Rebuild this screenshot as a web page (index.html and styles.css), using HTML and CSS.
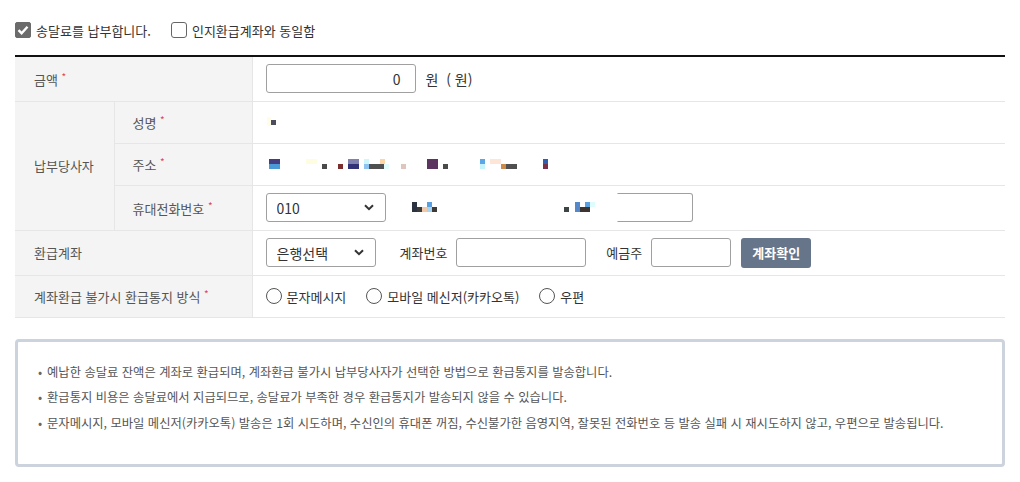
FILE: index.html
```html
<!DOCTYPE html>
<html lang="ko">
<head>
    <meta charset="UTF-8">
    <title>송달료 납부</title>
    <link rel="stylesheet" href="styles.css">
</head>
<body>
    <div class="wrap">
        <div class="check-row">
            <label class="chk"><span class="box on"><svg width="12" height="10" viewBox="0 0 12 10"><path d="M1.5 5.2 L4.6 8.2 L10.5 1.8" fill="none" stroke="#fff" stroke-width="2.4"/></svg></span>송달료를 납부합니다.</label>
            <label class="chk"><span class="box"></span>인지환급계좌와 동일함</label>
        </div>

        <table class="form-table">
            <colgroup>
                <col class="c1">
                <col class="c2">
                <col>
            </colgroup>
            <tr class="h45">
                <th colspan="2">금액 <em>*</em></th>
                <td><div class="cell"><input class="txt amount" type="text" value="0"><span class="unit">원 &nbsp;( 원)</span></div></td>
            </tr>
            <tr class="h42">
                <th rowspan="3">납부당사자</th>
                <th class="sub">성명 <em>*</em></th>
                <td>
                    <div class="cell"><svg class="mask" width="12" height="12" viewBox="0 0 12 12"><rect x="1" y="1" width="4" height="9" fill="#fffde8"/><rect x="5" y="4" width="5" height="5" fill="#4c4e5e"/></svg></div>
                </td>
            </tr>
            <tr class="h42">
                <th class="sub">주소 <em>*</em></th>
                <td>
                    <div class="cell">
                    <svg class="mask" width="290" height="12" viewBox="0 0 290 12">
                        <rect x="3" y="1" width="11" height="5" fill="#433e7f"/><rect x="3" y="6" width="11" height="5" fill="#4b9ad8"/>
                        <rect x="40" y="1" width="11" height="5" fill="#fffde0"/><rect x="56" y="6" width="5" height="5" fill="#4a4a4a"/>
                        <rect x="72" y="6" width="5" height="5" fill="#7a2e2e"/>
                        <rect x="82" y="1" width="11" height="5" fill="#7f80ad"/><rect x="82" y="6" width="11" height="5" fill="#2f3076"/>
                        <rect x="98" y="1" width="5" height="5" fill="#cff7fb"/><rect x="98" y="6" width="5" height="5" fill="#90c4f0"/>
                        <rect x="103" y="6" width="15" height="5" fill="#505050"/><rect x="114" y="1" width="5" height="5" fill="#fcd5a8"/>
                        <rect x="118" y="6" width="5" height="5" fill="#e2fcfc"/><rect x="135" y="6" width="5" height="5" fill="#ddc6bd"/>
                        <rect x="161" y="1" width="11" height="10" fill="#5b3560"/><rect x="177" y="6" width="5" height="5" fill="#4a4a4a"/>
                        <rect x="214" y="1" width="5" height="5" fill="#5aa6e6"/><rect x="214" y="6" width="5" height="5" fill="#c4f3fb"/>
                        <rect x="224" y="1" width="11" height="5" fill="#fde6d8"/><rect x="235" y="6" width="5" height="5" fill="#cc8a4a"/>
                        <rect x="240" y="6" width="11" height="5" fill="#505050"/>
                        <rect x="277" y="1" width="5" height="5" fill="#2f5fae"/><rect x="277" y="6" width="5" height="5" fill="#7a3046"/>
                    </svg>
                    </div>
                </td>
            </tr>
            <tr class="h45">
                <th class="sub">휴대전화번호 <em>*</em></th>
                <td>
                    <div class="cell phone">
                        <span class="sel w119"><select><option>010</option></select><svg class="arrow" width="10" height="7" viewBox="0 0 10 7"><path d="M1 1.2 L5 5.2 L9 1.2" fill="none" stroke="#333" stroke-width="2"/></svg></span>
                        <svg class="mask m1" width="30" height="12" viewBox="0 0 30 12"><rect x="0" y="0" width="5" height="10" fill="#2b3240"/><rect x="5" y="5" width="5" height="5" fill="#3d3a38"/><rect x="10" y="5" width="5" height="5" fill="#f0c9a8"/><rect x="15" y="0" width="5" height="5" fill="#5aa0e0"/><rect x="15" y="5" width="5" height="5" fill="#a8d4f4"/><rect x="20" y="5" width="5" height="5" fill="#3d3a38"/></svg>
                        <svg class="mask m2" width="34" height="12" viewBox="0 0 34 12"><rect x="0" y="5" width="5" height="5" fill="#3d4444"/><rect x="11" y="0" width="5" height="10" fill="#5588c8"/><rect x="16" y="5" width="10" height="5" fill="#3d3430"/><rect x="21" y="0" width="5" height="5" fill="#5aa0e0"/><rect x="26" y="0" width="5" height="5" fill="#dffcfc"/></svg>
                        <input class="txt tail" type="text">
                    </div>
                </td>
            </tr>
            <tr class="h45">
                <th colspan="2">환급계좌</th>
                <td>
                    <div class="cell bank">
                        <span class="sel w109"><select><option>은행선택</option></select><svg class="arrow" width="10" height="7" viewBox="0 0 10 7"><path d="M1 1.2 L5 5.2 L9 1.2" fill="none" stroke="#333" stroke-width="2"/></svg></span>
                        <span class="lbl first">계좌번호</span>
                        <input class="txt acct" type="text">
                        <span class="lbl">예금주</span>
                        <input class="txt owner" type="text">
                        <button class="btn">계좌확인</button>
                    </div>
                </td>
            </tr>
            <tr class="h42">
                <th colspan="2">계좌환급 불가시 환급통지 방식 <em>*</em></th>
                <td>
                    <div class="cell radios">
                        <label class="rd"><span class="dot"></span>문자메시지</label>
                        <label class="rd"><span class="dot"></span>모바일 메신저(카카오톡)</label>
                        <label class="rd"><span class="dot"></span>우편</label>
                    </div>
                </td>
            </tr>
        </table>

        <div class="notice">
            <ul>
                <li>예납한 송달료 잔액은 계좌로 환급되며, 계좌환급 불가시 납부당사자가 선택한 방법으로 환급통지를 발송합니다.</li>
                <li>환급통지 비용은 송달료에서 지급되므로, 송달료가 부족한 경우 환급통지가 발송되지 않을 수 있습니다.</li>
                <li>문자메시지, 모바일 메신저(카카오톡) 발송은 1회 시도하며, 수신인의 휴대폰 꺼짐, 수신불가한 음영지역, 잘못된 전화번호 등 발송 실패 시 재시도하지 않고, 우편으로 발송됩니다.</li>
            </ul>
        </div>
    </div>
</body>
</html>
```

FILE: styles.css
```css
body {
    margin: 0;
    background: #fff;
    color: #333;
    font-family: "Noto Sans CJK KR", "Noto Sans", sans-serif;
    font-size: 13px;
}

.wrap {
    padding: 20px 15px 0;
    width: 990px;
}

/* 상단 체크박스 */
.check-row {
    display: flex;
    align-items: center;
    height: 20px;
    margin-bottom: 15px;
}

.chk {
    display: flex;
    align-items: center;
    margin-right: 20px;
    color: #333;
}

.box {
    width: 14px;
    height: 14px;
    border: 1px solid #666;
    border-radius: 3px;
    margin-right: 5px;
    display: flex;
    align-items: center;
    justify-content: center;
}

.box.on {
    background: #6b6b6b;
    border-color: #6b6b6b;
    border-radius: 2px;
}

/* 입력 테이블 */
.form-table {
    width: 990px;
    border-collapse: collapse;
    border-top: 2px solid #111;
}

.c1 { width: 99px; }
.c2 { width: 138px; }

.form-table th,
.form-table td {
    border-bottom: 1px solid #e6e6e6;
    padding: 0;
    vertical-align: middle;
}

.form-table th {
    background: #f4f4f4;
    border-right: 1px solid #e6e6e6;
    color: #555;
    font-weight: normal;
    text-align: left;
    padding-left: 19px;
}

.form-table th.sub {
    padding-left: 18px;
}

.form-table td {
    padding-left: 13px;
}

.h42 { height: 42px; }
.h45 { height: 45px; }

.cell {
    display: flex;
    align-items: center;
}

em {
    color: #e0474c;
    font-style: normal;
    font-size: 10px;
    vertical-align: 4px;
}

.txt {
    box-sizing: border-box;
    height: 29px;
    border: 1px solid #a0a0a0;
    border-radius: 3px;
    padding: 0 10px;
    font-family: inherit;
    font-size: 14px;
    color: #333;
}

.amount {
    width: 150px;
    text-align: right;
    padding-right: 14px;
}

.unit {
    margin-left: 10px;
    font-size: 14px;
}

.mask {
    display: block;
}

.sel {
    position: relative;
    display: block;
}

.sel select {
    appearance: none;
    display: block;
    box-sizing: border-box;
    height: 29px;
    border: 1px solid #a0a0a0;
    border-radius: 3px;
    background: #fff;
    padding: 0 10px;
    font-family: inherit;
    font-size: 14px;
    color: #333;
}

.w119 select { width: 120px; }
.w109 select { width: 110px; }

.sel .arrow {
    position: absolute;
    right: 12px;
    top: 11px;
}

.phone .m1 { margin-left: 26px; }
.phone .m2 { margin-left: 122px; }

.tail {
    width: 76px;
    border-left-color: transparent;
    border-radius: 0 3px 3px 0;
    margin-left: 19px;
}

.bank .lbl {
    margin: 0 9px 0 20px;
    color: #333;
}

.bank .lbl.first {
    margin-left: 24px;
}

.acct { width: 130px; }
.owner { width: 80px; }

.btn {
    height: 30px;
    width: 70px;
    margin-left: 10px;
    border: none;
    border-radius: 3px;
    background: #67758a;
    color: #fff;
    font-family: inherit;
    font-size: 13px;
    font-weight: bold;
}

.radios {
    color: #333;
}

.rd {
    display: flex;
    align-items: center;
    margin-right: 20px;
}

.dot {
    box-sizing: border-box;
    width: 16px;
    height: 16px;
    border: 1px solid #555;
    border-radius: 50%;
    margin-right: 5px;
}

/* 안내 박스 */
.notice {
    margin-top: 21px;
    border: 3px solid #cdd3dd;
    border-radius: 4px;
    box-sizing: border-box;
    height: 128px;
}

.notice ul {
    list-style: none;
    margin: 0;
    padding: 18px 0 0 20px;
}

.notice li {
    font-size: 12.3px;
    color: #555;
    line-height: 25.5px;
    padding-left: 9px;
    position: relative;
}

.notice li::before {
    content: "•";
    position: absolute;
    left: 0;
    color: #666;
}
```
